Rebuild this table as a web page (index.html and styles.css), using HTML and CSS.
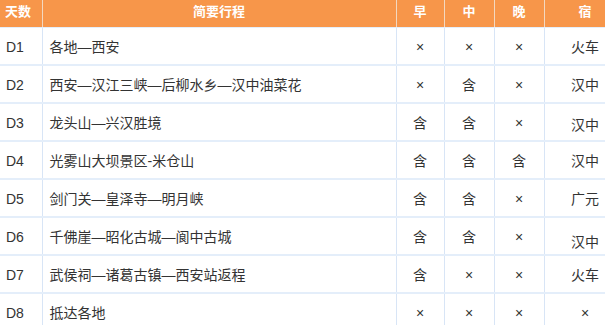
FILE: index.html
```html
<!DOCTYPE html>
<html lang="zh">
<head>
<meta charset="utf-8">
<link rel="stylesheet" href="styles.css">
</head>
<body>
<table class="trip">
  <colgroup>
    <col class="c-day"><col class="c-route"><col class="c-b"><col class="c-l"><col class="c-d"><col class="c-stay">
  </colgroup>
  <thead>
    <tr><th class="left">天数</th><th>简要行程</th><th>早</th><th>中</th><th>晚</th><th>宿</th></tr>
  </thead>
  <tbody>
    <tr><td class="day">D1</td><td class="route">各地—西安</td><td>×</td><td>×</td><td>×</td><td>火车</td></tr>
    <tr><td class="day">D2</td><td class="route">西安—汉江三峡—后柳水乡—汉中油菜花</td><td>×</td><td>含</td><td>×</td><td>汉中</td></tr>
    <tr><td class="day">D3</td><td class="route">龙头山—兴汉胜境</td><td>含</td><td>含</td><td>×</td><td class="low1">汉中</td></tr>
    <tr><td class="day">D4</td><td class="route">光雾山大坝景区-米仓山</td><td>含</td><td>含</td><td>含</td><td>汉中</td></tr>
    <tr><td class="day">D5</td><td class="route">剑门关—皇泽寺—明月峡</td><td>含</td><td>含</td><td>×</td><td>广元</td></tr>
    <tr><td class="day">D6</td><td class="route">千佛崖—昭化古城—阆中古城</td><td>含</td><td>含</td><td>×</td><td class="low">汉中</td></tr>
    <tr><td class="day">D7</td><td class="route">武侯祠—诸葛古镇—西安站返程</td><td>含</td><td>×</td><td>×</td><td>火车</td></tr>
    <tr><td class="day">D8</td><td class="route">抵达各地</td><td>×</td><td>×</td><td>×</td><td>×</td></tr>
  </tbody>
</table>
</body>
</html>
```

FILE: styles.css
```css
html, body {
  margin: 0;
  padding: 0;
  background: #ffffff;
  overflow: hidden;
}
body {
  font-family: "Liberation Sans", "Noto Sans CJK SC", sans-serif;
  color: #333333;
}
.trip {
  border-collapse: collapse;
  table-layout: fixed;
  width: 626px;
}
.c-day { width: 42px; }
.c-route { width: 354px; }
.c-b { width: 48px; }
.c-l { width: 50px; }
.c-d { width: 50px; }
.c-stay { width: 82px; }
.trip th {
  background: #f7964a;
  color: #ffffff;
  font-size: 13px;
  font-weight: bold;
  height: 27px;
  box-sizing: border-box;
  padding: 0 0 3px;
  text-align: center;
  border-right: 1px solid #f3d8c0;
  border-bottom: 1px solid #e4eefa;
  line-height: 18px;
}
.trip th.left {
  text-align: left;
  padding-left: 5px;
}
.trip tbody tr {
  height: 38px;
}
.trip td {
  font-size: 14px;
  padding: 2px 0 0;
  text-align: center;
  border-right: 1px solid #d8e5f6;
  border-bottom: 2px solid #e4eefa;
  line-height: 18px;
}
.trip td.day {
  text-align: left;
  padding-left: 6px;
}
.trip td.route {
  text-align: left;
  padding-left: 7px;
}
.trip td.low {
  padding-top: 11px;
}
.trip td.low1 {
  padding-top: 5px;
}
```
